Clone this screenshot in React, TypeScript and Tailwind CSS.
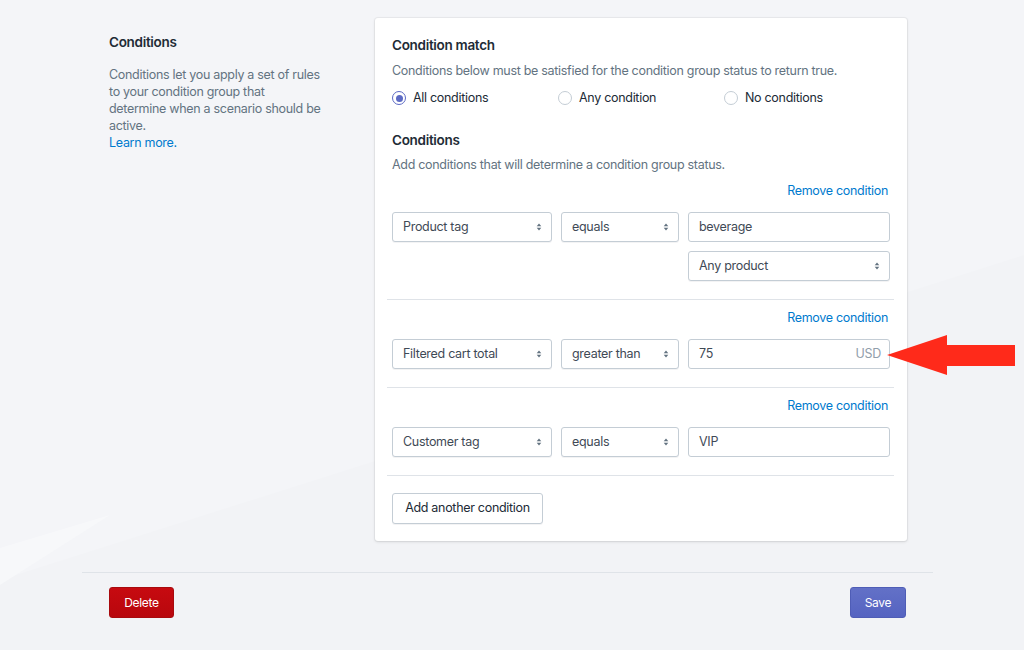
import React from "react";

const FONT = { fontFamily: "Inter, 'Noto Sans', 'Liberation Sans', sans-serif", letterSpacing: "-0.3px" };

function Chevrons() {
  return (
    <svg width="8" height="12" viewBox="0 0 8 12" className="text-[#637381]">
      <path d="M4 2.5 L6.3 5.2 H1.7 Z" fill="currentColor" />
      <path d="M4 9.5 L6.3 6.8 H1.7 Z" fill="currentColor" />
    </svg>
  );
}

function Select({ value, className }: { value: string; className: string }) {
  return (
    <div
      className={`flex h-[30px] items-center justify-between rounded-[3px] border border-[#c4cdd5] bg-white pl-[10px] pr-[8px] text-[12.5px] text-[#3f4a56] shadow-[0_1px_0_rgba(22,29,37,0.05)] ${className}`}
    >
      <span>{value}</span>
      <Chevrons />
    </div>
  );
}

function Input({ value, suffix, className }: { value: string; suffix?: string; className: string }) {
  return (
    <div
      className={`flex h-[30px] items-center justify-between rounded-[3px] border border-[#c4cdd5] bg-white pl-[10px] pr-[8px] text-[12.5px] text-[#3f4a56] ${className}`}
    >
      <span>{value}</span>
      {suffix && <span className="text-[#919eab]">{suffix}</span>}
    </div>
  );
}

function Radio({ label, checked }: { label: string; checked?: boolean }) {
  return (
    <div className="flex w-[169px] items-center gap-[7px]">
      <span
        className={`flex h-[14px] w-[14px] items-center justify-center rounded-full border bg-white ${
          checked ? "border-[#5c6ac4]" : "border-[#c4cdd5]"
        }`}
      >
        {checked && <span className="h-[7px] w-[7px] rounded-full bg-[#5c6ac4]" />}
      </span>
      <span className="text-[12.5px] text-[#212b36]">{label}</span>
    </div>
  );
}

function RemoveLink() {
  return (
    <div className="flex justify-end text-[12.5px] leading-[18px] text-[#007ace]">
      <span className="mr-[2px]">Remove condition</span>
    </div>
  );
}

function Divider() {
  return <div className="-ml-[5px] -mr-[4px] h-px bg-[#dfe3e8]" />;
}

function ConditionRow({ field, op, value, suffix }: { field: string; op: string; value: string; suffix?: string }) {
  return (
    <div className="mt-[12px] flex">
      <Select value={field} className="w-[160px]" />
      <Select value={op} className="ml-[9px] w-[118px]" />
      <Input value={value} suffix={suffix} className="ml-[9px] flex-1" />
    </div>
  );
}

export default function App() {
  return (
    <div className="relative h-[650px] w-full overflow-hidden bg-[#f4f5f8]" style={FONT}>
      {/* faint diagonal light band in background */}
      <svg className="absolute inset-0" width="1024" height="650" viewBox="0 0 1024 650">
        <polygon points="0,580 1024,255 1024,650 0,650" fill="#f2f3f6" />
        <polygon points="0,548 110,515 0,585" fill="#f7f8fa" />
      </svg>

      <div className="relative px-[82px] pt-[18px]">
        <div className="flex">
          {/* left description */}
          <div className="w-[293px] pl-[27px] pr-[51px] pt-[14px]">
            <h2 className="text-[13.5px] font-semibold leading-[20px] text-[#212b36]">Conditions</h2>
            <p className="mt-[14px] text-[12.5px] leading-[17px] text-[#637381]">
              Conditions let you apply a set of rules to your condition group that determine when a scenario should be
              active.
            </p>
            <a className="block text-[12.5px] leading-[17px] text-[#007ace]">Learn more.</a>
          </div>

          {/* card */}
          <div className="w-[532px] rounded-[3px] bg-white px-[17px] pb-[17px] pt-[17px] shadow-[0_0_0_1px_rgba(63,63,68,0.05),0_1px_3px_0_rgba(63,63,68,0.15)]">
            <h3 className="text-[13.5px] font-semibold leading-[20px] text-[#212b36]">Condition match</h3>
            <p className="mt-[7px] text-[12.5px] leading-[18px] text-[#637381]">
              Conditions below must be satisfied for the condition group status to return true.
            </p>
            <div className="mt-[8px] flex h-[20px] items-center">
              <Radio label="All conditions" checked />
              <Radio label="Any condition" />
              <Radio label="No conditions" />
            </div>

            <h3 className="mt-[22px] text-[13.5px] font-semibold leading-[20px] text-[#212b36]">Conditions</h3>
            <p className="mt-[6px] text-[12.5px] leading-[18px] text-[#637381]">
              Add conditions that will determine a condition group status.
            </p>

            <div className="mt-[8px]">
              <RemoveLink />
            </div>
            <ConditionRow field="Product tag" op="equals" value="beverage" />
            <div className="mt-[9px] flex justify-end">
              <Select value="Any product" className="w-[202px]" />
            </div>
            <div className="mt-[18px]">
              <Divider />
            </div>

            <div className="mt-[9px]">
              <RemoveLink />
            </div>
            <ConditionRow field="Filtered cart total" op="greater than" value="75" suffix="USD" />
            <div className="mt-[18px]">
              <Divider />
            </div>

            <div className="mt-[9px]">
              <RemoveLink />
            </div>
            <ConditionRow field="Customer tag" op="equals" value="VIP" />
            <div className="mt-[18px]">
              <Divider />
            </div>

            <button className="mt-[17px] flex h-[31px] w-[151px] items-center justify-center rounded-[3px] border border-[#c4cdd5] bg-white text-[12.5px] text-[#212b36] shadow-[0_1px_0_rgba(22,29,37,0.05)]">
              Add another condition
            </button>
          </div>
        </div>

        <div className="mr-[9px] mt-[31px] h-px bg-[#dfe3e8]" />

        <div className="mt-[14px] flex justify-between pl-[27px] pr-[36px]">
          <button className="flex h-[31px] w-[65px] items-center justify-center rounded-[3px] border border-[#a80a0e] bg-gradient-to-b from-[#c70a10] to-[#b8070d] text-[12px] text-white">
            Delete
          </button>
          <button className="flex h-[31px] w-[56px] items-center justify-center rounded-[3px] border border-[#4f5db6] bg-gradient-to-b from-[#6371c7] to-[#5563c1] text-[12px] text-white">
            Save
          </button>
        </div>
      </div>

      {/* red annotation arrow */}
      <svg className="absolute left-[885px] top-[334px]" width="132" height="42" viewBox="0 0 132 42">
        <polygon points="2,21 62,1 62,11 130,11 130,32 62,32 62,41" fill="#ff2a1a" />
      </svg>
    </div>
  );
}
